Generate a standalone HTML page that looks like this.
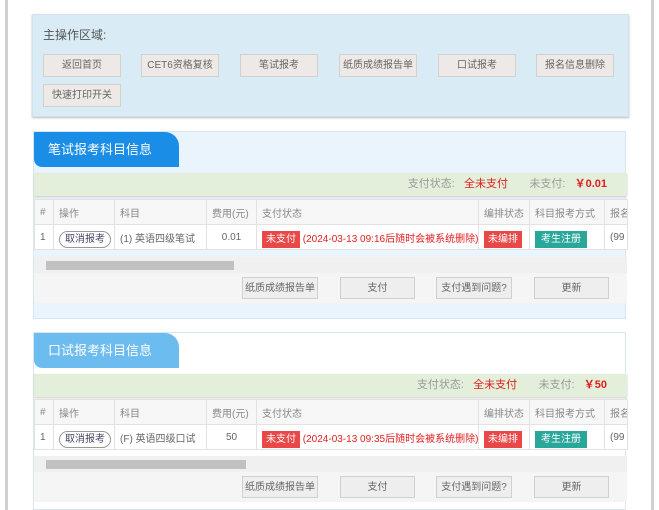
<!DOCTYPE html>
<html><head><meta charset="utf-8"><style>
*{margin:0;padding:0;box-sizing:border-box}
body{width:659px;height:510px;background:#fff;font-family:"Liberation Sans","Noto Sans CJK SC",sans-serif;font-size:11px;color:#333;position:relative;overflow:hidden}
.a{position:absolute}
.vl{position:absolute;top:0;bottom:0;width:3px;background:#d0d0d0}
.top{left:32px;top:14px;width:597px;height:103px;background:#d9ecf6;border:1px solid #cfe2ee;box-shadow:0 1px 2px #bbb}
.btn{position:absolute;height:23px;background:#ede9e6;border:1px solid #d4d0cc;font-size:10px;text-align:center;line-height:21px;color:#666}
.sec{left:33px;width:593px;border:1px solid #d8e6ef}
.tab{position:absolute;left:0;top:0;width:145px;height:35px;border-radius:0 14px 0 8px;color:#fff;font-size:13px;line-height:35px;padding-left:14px}
.green{position:absolute;left:0;width:593px;height:23px;background:#e3efdb;box-shadow:0 1px 2px #ccc;font-size:11px;line-height:23px;text-align:right;padding-right:20px;color:#999}
.green b{color:#e21d1d;font-weight:normal}
table{position:absolute;left:0;border-collapse:collapse;width:593px;font-size:10px;table-layout:fixed;background:#fff}
td{border:1px solid #e2e2e2;height:25px;padding:0 5px;white-space:nowrap;overflow:hidden;color:#666}
tr.h td{background:#f7f7f7;color:#888}
.red{background:#e94848;color:#fff;padding:3px 4px}
.tl{background:#2aa79b;color:#fff;padding:3px 6px}
.pill{border:1px solid #999;border-radius:10px;padding:2px 5px;color:#446}
.sb{position:absolute;left:0;width:593px;height:16px;background:#f0f0f0}
.sb i{position:absolute;left:12px;top:4px;height:9px;background:#c1c1c1}
.bb{position:absolute;left:0;width:593px;height:30px;background:#f5f5f5}
.bb .btn{top:4px;height:22px;background:#eee;border-color:#d0d0d0}
</style></head><body>
<div class="vl" style="left:5px"></div><div class="vl" style="left:651px"></div>
<div class="a top">
<div class="a" style="left:10px;top:11px;font-size:12px;color:#555">主操作区域:</div>
<div class="btn" style="left:10px;top:39px;width:78px">返回首页</div>
<div class="btn" style="left:108px;top:39px;width:78px">CET6资格复核</div>
<div class="btn" style="left:207px;top:39px;width:78px">笔试报考</div>
<div class="btn" style="left:306px;top:39px;width:78px">纸质成绩报告单</div>
<div class="btn" style="left:405px;top:39px;width:78px">口试报考</div>
<div class="btn" style="left:503px;top:39px;width:78px">报名信息删除</div>
<div class="btn" style="left:10px;top:69px;width:78px">快速打印开关</div>
</div>

<div class="a sec" style="top:131px;height:188px;background:#e9f4fc">
<div class="tab" style="background:#1a8de6">笔试报考科目信息</div>
<div class="green" style="top:41px">支付状态:&nbsp;&nbsp;&nbsp;<b>全未支付</b>&nbsp;&nbsp;&nbsp;&nbsp;&nbsp;&nbsp;&nbsp;未支付:&nbsp;&nbsp;&nbsp;<b style="font-weight:bold">￥0.01</b></div>
<table style="top:67px"><colgroup><col style="width:19px"><col style="width:61px"><col style="width:92px"><col style="width:50px"><col style="width:222px"><col style="width:51px"><col style="width:75px"><col style="width:23px"></colgroup>
<tr class="h"><td>#</td><td>操作</td><td>科目</td><td>费用(元)</td><td>支付状态</td><td>编排状态</td><td>科目报考方式</td><td>报名</td></tr>
<tr><td>1</td><td><span class="pill">取消报考</span></td><td>(1) 英语四级笔试</td><td style="text-align:center">0.01</td><td><span class="red">未支付</span> <span style="color:#e21d1d">(2024-03-13 09:16后随时会被系统删除)</span></td><td><span class="red">未编排</span></td><td><span class="tl">考生注册</span></td><td>(99</td></tr></table>
<div class="sb" style="top:125px"><i style="width:188px"></i></div>
<div class="bb" style="top:141px">
<div class="btn" style="left:208px;width:76px">纸质成绩报告单</div>
<div class="btn" style="left:306px;width:75px">支付</div>
<div class="btn" style="left:402px;width:76px">支付遇到问题?</div>
<div class="btn" style="left:500px;width:75px">更新</div></div>
</div>

<div class="a sec" style="top:332px;height:178px;background:#fff">
<div class="tab" style="background:#6dbcf0">口试报考科目信息</div>
<div class="green" style="top:41px">支付状态:&nbsp;&nbsp;&nbsp;<b>全未支付</b>&nbsp;&nbsp;&nbsp;&nbsp;&nbsp;&nbsp;&nbsp;未支付:&nbsp;&nbsp;&nbsp;<b style="font-weight:bold">￥50</b></div>
<table style="top:66px"><colgroup><col style="width:19px"><col style="width:61px"><col style="width:92px"><col style="width:50px"><col style="width:222px"><col style="width:51px"><col style="width:75px"><col style="width:23px"></colgroup>
<tr class="h"><td>#</td><td>操作</td><td>科目</td><td>费用(元)</td><td>支付状态</td><td>编排状态</td><td>科目报考方式</td><td>报名</td></tr>
<tr><td>1</td><td><span class="pill">取消报考</span></td><td>(F) 英语四级口试</td><td style="text-align:center">50</td><td><span class="red">未支付</span> <span style="color:#e21d1d">(2024-03-13 09:35后随时会被系统删除)</span></td><td><span class="red">未编排</span></td><td><span class="tl">考生注册</span></td><td>(99</td></tr></table>
<div class="sb" style="top:123px"><i style="width:200px"></i></div>
<div class="bb" style="top:139px">
<div class="btn" style="left:208px;width:76px">纸质成绩报告单</div>
<div class="btn" style="left:306px;width:75px">支付</div>
<div class="btn" style="left:402px;width:76px">支付遇到问题?</div>
<div class="btn" style="left:500px;width:75px">更新</div></div>
</div>
</body></html>
